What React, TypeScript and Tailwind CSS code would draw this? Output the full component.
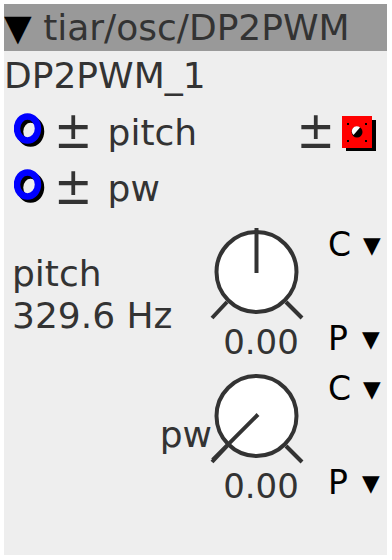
import React from 'react';

function Jack() {
  return (
    <svg width="40" height="40" viewBox="0 0 40 40" className="shrink-0">
      <ellipse cx="16.5" cy="18.5" rx="10.5" ry="12" fill="none" stroke="#000" strokeWidth="6.5" />
      <ellipse cx="13.5" cy="15.5" rx="10.5" ry="12" fill="none" stroke="#0000ff" strokeWidth="6.5" />
    </svg>
  );
}

function Outlet() {
  return (
    <svg width="40" height="40" viewBox="0 0 40 40" className="shrink-0">
      <rect x="6" y="6" width="30" height="31" fill="#000" />
      <rect x="2" y="2" width="30" height="32" fill="#ff0000" />
      <circle cx="17" cy="18" r="5.5" fill="#000" />
      <path d="M13.5 21 A4.5 4.5 0 0 1 20 13.5 Z" fill="#fff" />
      <rect x="7" y="9" width="2" height="2" fill="#000" />
      <rect x="25" y="9" width="2" height="2" fill="#000" />
      <rect x="7" y="26" width="2" height="2" fill="#000" />
      <rect x="25" y="26" width="2" height="2" fill="#000" />
    </svg>
  );
}

function Knob({ angle }: { angle: number }) {
  // angle in degrees, 0 = straight up, negative = counter-clockwise
  const cx = 49.5;
  const cy = 50;
  const len = angle === 0 ? 44 : 62;
  const rad = (angle * Math.PI) / 180;
  const x1 = angle === 0 ? cx : cx + 1.5;
  const y1 = angle === 0 ? cy + 1 : cy - 1.5;
  const x2 = cx + Math.sin(rad) * len;
  const y2 = cy - Math.cos(rad) * len;
  return (
    <svg width="100" height="100" viewBox="0 0 100 100" className="block">
      <circle cx={cx} cy={cy} r="40" fill="#fff" stroke="#333" strokeWidth="4" />
      <line x1="5" y1="96" x2="20" y2="80" stroke="#333" strokeWidth="4" />
      <line x1="79" y1="80" x2="95" y2="96" stroke="#333" strokeWidth="4" />
      <line x1={x1} y1={y1} x2={x2} y2={angle === 0 ? 6 : y2} stroke="#333" strokeWidth="4" />
    </svg>
  );
}

function Selectors() {
  return (
    <div className="w-[80px] flex flex-col pl-[21px] text-black">
      <div className="h-[100px] pt-[4px] flex items-start">
        <span className="text-[33px] leading-[38px]">C</span>
        <span className="text-[23px] leading-[24px] ml-[12px] mt-[7px]">▼</span>
      </div>
      <div className="flex items-start -mt-[2px]">
        <span className="text-[33px] leading-[38px]">P</span>
        <span className="text-[23px] leading-[24px] ml-[14px] mt-[7px]">▼</span>
      </div>
    </div>
  );
}

function PlusMinus({ className = '' }: { className?: string }) {
  return (
    <span className={`inline-block text-[46px] leading-[46px] scale-y-[1.12] -mt-[6px] ${className}`}>±</span>
  );
}

export default function App() {
  return (
    <div className="w-[392px] h-[560px] bg-white pt-1 pl-1 font-['DejaVu_Sans',sans-serif]">
      <div className="w-[383px] h-[551px] bg-[#eeeeee] flex flex-col text-[#333333] overflow-hidden">
        {/* header */}
        <div className="h-[47px] bg-[#999999] pt-[3px] text-[36px] leading-[42px] whitespace-nowrap">
          <span className="text-black">▼</span> tiar/osc/DP2PWM
        </div>

        {/* instance name */}
        <div className="h-[54px] pt-[4px] text-[36px] leading-[42px]">DP2PWM_1</div>

        {/* inlets / outlet */}
        <div className="h-[56px] flex items-center text-[36px] leading-[42px]">
          <div className="ml-[10px]"><Jack /></div>
          <PlusMinus />
          <span className="ml-[15px]">pitch</span>
          <PlusMinus className="ml-auto" />
          <div className="mr-[7px] ml-[5px] mt-[2px]"><Outlet /></div>
        </div>
        <div className="h-[56px] flex items-center text-[36px] leading-[42px]">
          <div className="ml-[10px]"><Jack /></div>
          <PlusMinus />
          <span className="ml-[15px]">pw</span>
        </div>

        <div className="h-[5px]" />

        {/* pitch parameter */}
        <div className="h-[144px] flex">
          <div className="w-[203px] pt-[31px] pl-[8px] text-[36px] leading-[42px]">
            <div>pitch</div>
            <div>329.6 Hz</div>
          </div>
          <div className="w-[100px]">
            <Knob angle={0} />
            <div className="text-[34px] leading-[40px] text-center pl-[8px]">0.00</div>
          </div>
          <Selectors />
        </div>

        {/* pw parameter */}
        <div className="h-[144px] flex">
          <div className="w-[208px] -mr-[5px] pt-[48px] text-[36px] leading-[42px] text-right">
            pw
          </div>
          <div className="w-[100px]">
            <Knob angle={-135} />
            <div className="text-[34px] leading-[40px] text-center pl-[8px]">0.00</div>
          </div>
          <Selectors />
        </div>
      </div>
    </div>
  );
}
